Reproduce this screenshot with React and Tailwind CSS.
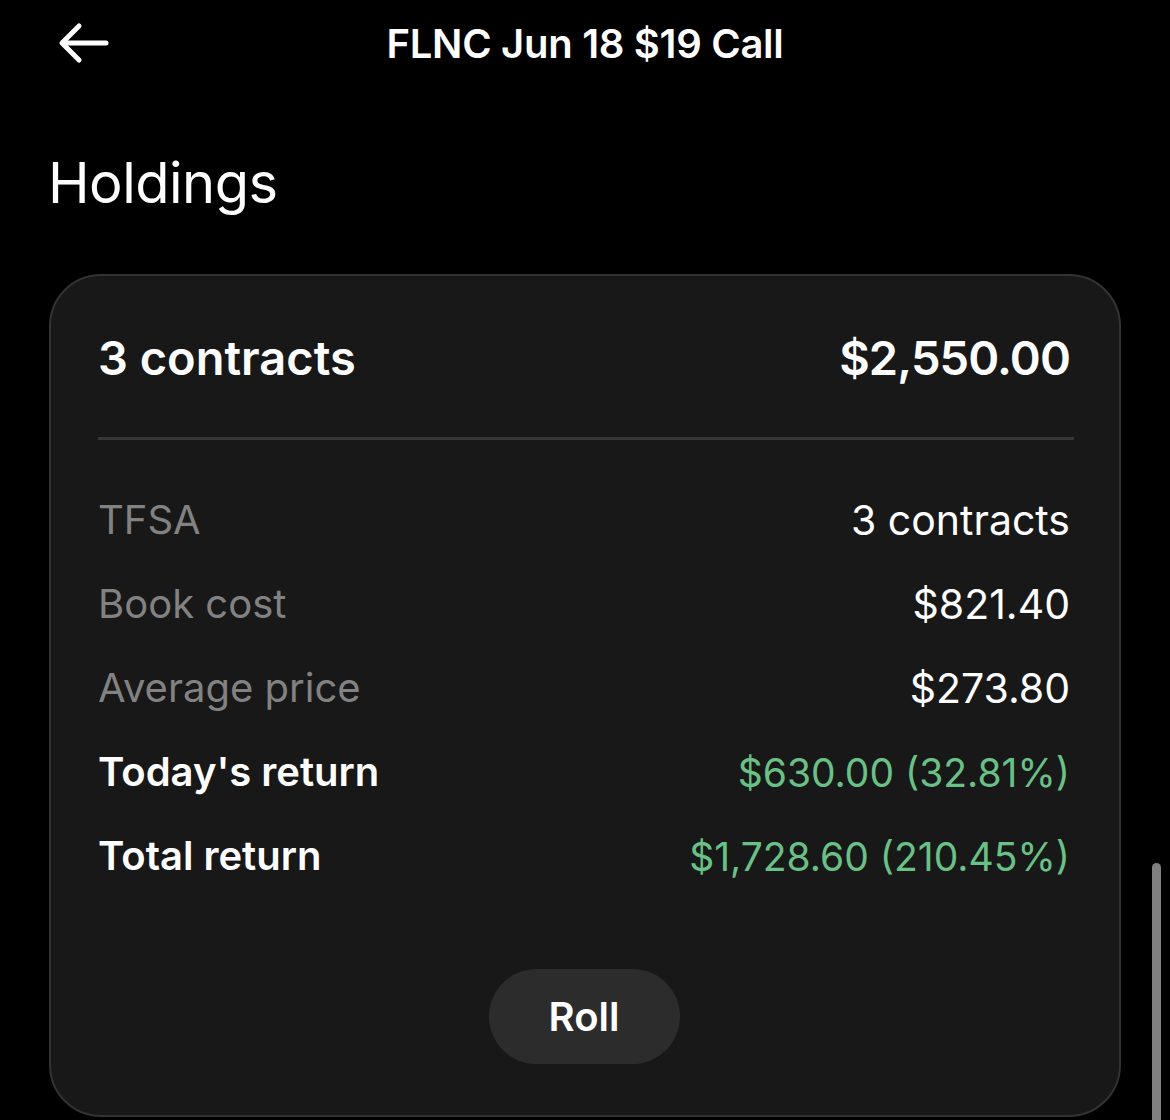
export default function App() {
	const rows = [
		{ label: 'TFSA', value: '3 contracts', strong: false, green: false },
		{ label: 'Book cost', value: '$821.40', strong: false, green: false },
		{ label: 'Average price', value: '$273.80', strong: false, green: false },
		{ label: "Today's return", value: '$630.00 (32.81%)', strong: true, green: true },
		{ label: 'Total return', value: '$1,728.60 (210.45%)', strong: true, green: true },
	];

	return (
		<div className="relative h-[1120px] w-full overflow-hidden bg-black text-white" style={{ fontFamily: 'Inter, "Noto Sans", sans-serif' }}>
			{/* top bar */}
			<div className="relative flex h-[88px] items-center justify-center">
				<button className="absolute left-[58px] top-[22px] p-0">
					<svg width="52" height="42" viewBox="0 0 52 42" fill="none" stroke="white" strokeWidth="5" strokeLinecap="round" strokeLinejoin="round">
						<path d="M48 21H5" />
						<path d="M21 4L4 21l17 17" />
					</svg>
				</button>
				<h1 className="text-[40px] font-semibold leading-none tracking-[-0.3px]">FLNC Jun 18 $19 Call</h1>
			</div>

			<h2 className="mt-[67px] pl-[48px] text-[56px] font-normal leading-none tracking-[-0.5px]">Holdings</h2>

			<div className="ml-[49px] mt-[63px] w-[1072px] rounded-[52px] border-2 border-[#333333] bg-[#181818] pb-[51px] pl-[47px] pr-[49px] pt-[58px]">
				<div className="flex items-center justify-between pb-[56px]">
					<span className="text-[47px] font-semibold leading-none">3 contracts</span>
					<span className="text-[47px] font-semibold leading-none tracking-[-0.9px]">$2,550.00</span>
				</div>
				<div className="mr-[-4px] h-[3px] bg-[#363636]" />
				<div className="flex flex-col gap-[44px] pt-[60px]">
					{rows.map(r => (
						<div key={r.label} className="flex h-[40px] items-center justify-between leading-none">
							<span className={r.strong ? 'text-[40px] font-semibold text-white' : 'text-[40px] text-[#828282]'}>{r.label}</span>
							<span className={r.green ? 'text-[39px] text-[#68c285]' : 'text-[41px] text-white'}>{r.value}</span>
						</div>
					))}
				</div>
				<div className="flex justify-center pt-[93px]">
					<button className="flex h-[95px] w-[191px] items-center justify-center rounded-full bg-[#2c2c2c] text-[40px] font-semibold text-white">
						Roll
					</button>
				</div>
			</div>

			<div className="absolute left-[1152px] top-[863px] h-[300px] w-[9px] rounded-full bg-[#808080]" />
		</div>
	);
}
